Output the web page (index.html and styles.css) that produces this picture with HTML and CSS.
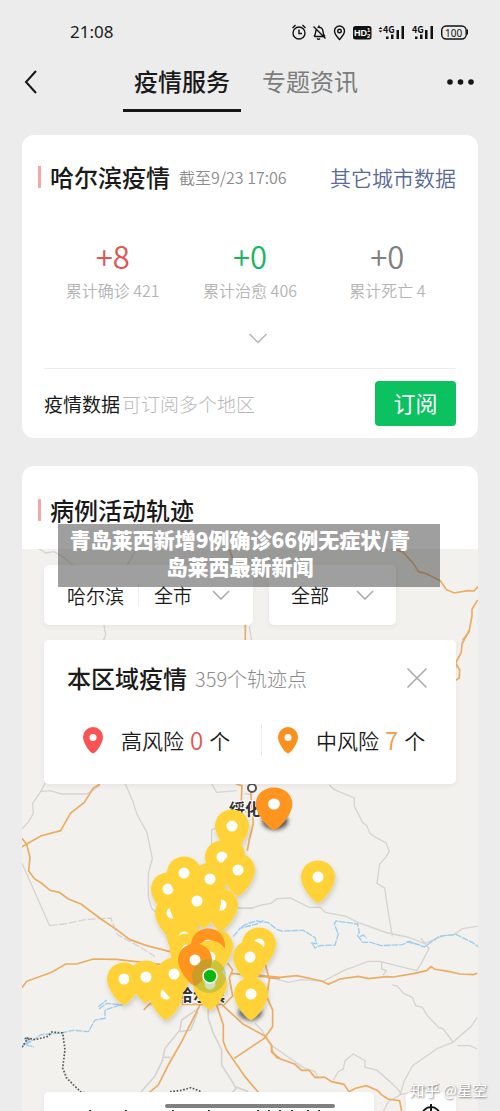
FILE: index.html
```html
<!DOCTYPE html>
<html lang="zh-CN">
<head>
<meta charset="utf-8">
<meta name="viewport" content="width=device-width, initial-scale=1">
<title>疫情服务</title>
<link rel="stylesheet" href="styles.css">
</head>
<body>
<div class="app">
  <div class="status">
    <time class="clock">21:08</time>
    <svg class="status-icons" width="180" height="18" viewBox="0 0 180 18" fill="none" stroke="#111" stroke-width="1.4" aria-hidden="true">
      <circle cx="9" cy="10" r="6"/><path d="M9 6.500V10.500h3M2.500 5l3-3M15.500 5l-3-3"/>
      <path d="M24.500 13.500h9.500M24 13.500c2-2 1.500-5 2-6.500M27.500 4.500c3-1 5.500 1 5.500 4 0 2 .5 3.500 2 5M27 15.500q1.500 1.500 3 0M23.500 3.500l12 12M29 4V2.500"/>
      <path d="M49.500 16.500c-2-2.500-5-5-5-8.500a5 5 0 0 1 10 0c0 3.500-3 6-5 8.500z"/><circle cx="49.500" cy="8" r="1.800"/>
      <rect x="63" y="3" width="18.500" height="13.500" rx="2.500" fill="#111" stroke="none"/>
      <g fill="#111" stroke="none">
        <text class="hd" x="64" y="13">HD</text>
        <text class="hd-num" x="77" y="9">1</text><text class="hd-num" x="77" y="15">2</text>
        <path d="M88.500 6l2-2 2 2zM88.500 7.500l2 2 2-2z"/>
        <text class="net" x="93" y="10">4G</text>
        <path d="M96 13.500h2.500V16H96zM101 11.500h2.500V16H101zM106.500 7h2.500v9h-2.500zM111.500 3h2.500v13h-2.500z"/>
        <text class="net" x="122" y="10">4G</text>
        <path d="M125 13.500h2.500V16H125zM130 11.500h2.500V16H130zM135 7h2.500v9H135zM140.500 3h2.500v13h-2.500z"/>
        <path d="M176.500 6.500h1.500v5h-1.500z"/>
        <text class="battery" x="155" y="13.500">100</text>
      </g>
      <rect x="151.700" y="3" width="24.500" height="13" rx="4.500"/>
    </svg>
  </div>

  <header class="nav">
    <button class="icon-button" type="button" aria-label="返回">
      <svg width="14" height="24" viewBox="0 0 14 24" fill="none" stroke="#161616" stroke-width="2"><path d="M12 1L2 12l10 11"/></svg>
    </button>
    <nav class="tabs">
      <a class="tab tab-active" href="#service" aria-current="page">疫情服务</a>
      <a class="tab" href="#news">专题资讯</a>
    </nav>
    <button class="icon-button" type="button" aria-label="更多">
      <svg width="28" height="8" viewBox="0 0 28 8" fill="#161616"><circle cx="4" cy="4" r="2.800"/><circle cx="14.500" cy="4" r="2.800"/><circle cx="25" cy="4" r="2.800"/></svg>
    </button>
  </header>

  <main class="content" id="service">
    <section class="card summary">
      <div class="card-head">
        <h2 class="title bar">哈尔滨疫情</h2>
        <span class="updated">截至9/23 17:06</span>
        <a class="other" href="#cities">其它城市数据</a>
      </div>
      <div class="stats">
        <div class="stat"><strong class="delta red">+8</strong><span class="total">累计确诊 421</span></div>
        <div class="stat"><strong class="delta green">+0</strong><span class="total">累计治愈 406</span></div>
        <div class="stat"><strong class="delta grey">+0</strong><span class="total">累计死亡 4</span></div>
      </div>
      <button class="expand" type="button" aria-label="展开">
        <svg width="18" height="11" viewBox="0 0 18 11" fill="none" stroke="#b5b5b5" stroke-width="1.500"><path d="M.5 1L9 9.500 17.500 1"/></svg>
      </button>
      <div class="subscribe">
        <p class="subscribe-text"><span>疫情数据</span><span class="hint">可订阅多个地区</span></p>
        <button class="subscribe-button" type="button">订阅</button>
      </div>
    </section>

    <section class="card track">
      <div class="track-head"><h2 class="title bar">病例活动轨迹</h2></div>
      <div class="map">
        <svg class="map-canvas" viewBox="22 549 456 562" preserveAspectRatio="xMidYMin slice" fill="none" role="img" aria-label="病例轨迹地图">
          <defs>
            <filter id="shade" x="-40%" y="-30%" width="180%" height="170%"><feDropShadow dx="1" dy="3" stdDeviation="2.500" flood-color="#000" flood-opacity=".16"/></filter>
            <filter id="soft" x="-50%" y="-50%" width="200%" height="200%"><feGaussianBlur stdDeviation="2"/></filter>
            <g id="pin"><path d="M0 26C-3.500 26-17 11-17 0A17 16.500 0 0 1 17 0C17 11 3.500 26 0 26Z"/><circle r="5.500" fill="#fff"/></g>
          </defs>
          <!-- district borders and minor roads -->
          <g stroke="#d5d4d1" stroke-width="4">
            <g transform="translate(20 480) scale(.3333)"><path d="M55 205l22 14 25-4 30 18 28 24M348 208l-26 47M252 435l5 30-12 30 10 45M688 440l10 60"/></g>
            <g transform="translate(20 780) scale(.3333)">
              <path d="M75 10L62 35 38 70l2 30-14 25-20 22M60 35l30-3 35 10h75l40-25M315 10l24 55 12 38 30 55 16 78-12 45v70l10 34 15 15M6 250l83 187" />
              <path d="M89 437l50-6 55-12 78-5 20 50 70 38 43 28" stroke-dasharray="24 5"/>
              <path d="M575 12l15 25 60-5M674 40l24 5M575 220v-70l35-15M640 385l60-2"/>
            </g>
            <g transform="translate(240 780) scale(.3333)">
              <path d="M0 385h35l30-10 28-5 18-14 40-2 57 28h33l15 15 62 12 35 18 90 32 60 12 50 20 60-25h25l30-20 85-14M268 15l15 14 60 25v24l25 50 12 8 10 25 12 8 36 20 10 25-11 18-18 20-8 58 23 14 8 55 15 90"/>
            </g>
            <g transform="translate(240 920) scale(.3333)">
              <path d="M100 175l45 12 40-8 65 5 60-32 75-28h35l50 13 60 15 12-18 25-48-25-32M425 125v22l14 5-10 14M457 195l15 3 20 23 25 11 10 25 20 5 15 25 35 36 12 3 30 40 55-47 18-28M638 367l-45 18-75 52-25 45-12 40M652 377h38l22 10M45 310l20 20 25 43 50 35 50 35 35 12 10 22M280 480l15-25 15-8 5-25 25-20 35 20v20l35 8 45 40 25 25v10l120-32M480 525l-35 20-15 28"/>
            </g>
            <g transform="translate(20 920) scale(.3333)"><path d="M565 260v35l15 45 25 50v45l35 55 8 15-20 22M645 500l40 15M535 265l-50 35-5 30-45 55-8 38-22 45-45 52M480 335l32-5 22-55M430 412h22" stroke-width="5"/></g>
          </g>
          <!-- rivers -->
          <g stroke="#9bcdef" stroke-width="4" stroke-dasharray="20 3">
            <g transform="translate(240 780) scale(.3333)"><path d="M5 440l20-10 25-7 35 5 25 20 15 5 65-2 35 22 5 18-15-2 10 15 15-7 45-2 10-32-12-32 5-8 65 9 5 25-5 10 15 20h25l30 10 65-3 20-10 45 17 45-32 50-6 50 25 20 15M360 470l10-5 10 10M500 485l40 10"/></g>
            <g transform="translate(20 920) scale(.3333)"><path d="M350 215l-30 20-15 20-45-5-24 18M300 255l-45 15v25l-30 5-20 35-45-4-37 8-60 5-30 20-25 15M640 50l20-25 50-13 20-10M12 355l18 10-18 8 30 8M235 260l25-20"/></g>
          </g>
          <!-- province boundary -->
          <g stroke="#555" stroke-width="5" stroke-dasharray="5 5" transform="translate(20 920) scale(.3333)"><path d="M6 382l18-28 22 5 38-10 12-13 32 3 7 50-7 55 12 30 25 25 18 17 25 5M450 515l35-4 28-8 30 12M15 354l20 6"/></g>
          <!-- highways -->
          <g stroke="#ecac62" stroke-width="5">
            <g transform="translate(20 480) scale(.3333)"><path d="M627 205l40 110 9 125v100"/></g>
            <g transform="translate(250 480) scale(.3333)"><path d="M423 207l35 8 30 33 18 27 20 5 45 22 18 27 24 10 40-7 19 1 15-16M683 360l-17 28v20l-9 48-19 24"/></g>
            <g transform="translate(20 630) scale(.3333)"><path d="M1348 0l-22 42-2 25-17 32 12 20-1 25-12 8M1307 99v16"/></g>
            <g transform="translate(20 780) scale(.3333)">
              <path d="M240 12l-20 12-27 43-41 32-16 28-14 25-60 16-62 36M6 175l14 18 10 40-4 40 18 24 20 12 26 22 28 6 27 20 38 15 60 45 47 32 40 30 50 18 70 18M648 12l18 5-2 50 15 30M690 10l10 120-12 50-6 32"/>
            </g>
            <g transform="translate(20 920) scale(.3333)">
              <path d="M6 203l14-19 75-27 42-25h33l50-15 70 1 130 15 45 3M371 270l15-15 40-20M488 215v38h125l25-25-10-55 10-23-15-20M635 160l145 15M728 100l20 80-8 50 18 40v50l-25 35-90 60M540 255l-25 50-30 60-40 70-30 60-30 25M590 255l20 60v50l10 25 55 80 40 47M605 253l65 60 65 35 20 28v20l25 20"/>
            </g>
            <g transform="translate(240 920) scale(.3333)"><path d="M0 160l120 12 50-5 48 10 27 6 20 10 35-16 55-8 30 7 55-6 20 1 60-10 40-9 13-12 12 8 40 6 35 8 40 2 12-4M95 375v15l15 23 55 20 20 18h22l18 21h30l20 13 37 8 15 22 20-10 32-8 35 15 10 12 20 13 35 5 7 37"/></g>
          </g>
          <circle cx="252" cy="788" r="4" fill="#fff" stroke="#555" stroke-width="2"/>
          <text class="place" x="229" y="815">绥化</text>
          <text class="place" x="177" y="1001">哈尔滨</text>
          <g fill="#ffd338" filter="url(#shade)">
            <use href="#pin" x="228" y="855"/><use href="#pin" x="222" y="857"/>
            <use href="#pin" x="232" y="826"/><use href="#pin" x="238" y="870"/>
            <use href="#pin" x="168" y="889"/><use href="#pin" x="210" y="879"/>
            <use href="#pin" x="184" y="873"/><use href="#pin" x="172" y="913"/>
            <use href="#pin" x="221" y="905"/><use href="#pin" x="187" y="907"/>
            <use href="#pin" x="204" y="902"/><use href="#pin" x="197" y="901"/>
            <use href="#pin" x="318" y="877"/>
          </g>
          <ellipse cx="250" cy="1013" rx="12" ry="7" fill="#777" filter="url(#soft)"/>
          <g fill="#ffd338" filter="url(#shade)">
            <use href="#pin" x="166" y="994"/><use href="#pin" x="124" y="979"/>
            <use href="#pin" x="146" y="977"/><use href="#pin" x="174" y="974"/>
            <use href="#pin" x="184" y="937"/><use href="#pin" x="187" y="950"/>
            <use href="#pin" x="216" y="946"/><use href="#pin" x="259" y="944"/>
            <use href="#pin" x="250" y="957"/><use href="#pin" x="251" y="994"/>
            <use href="#pin" x="210" y="984"/>
          </g>
          <use href="#pin" x="208" y="945" fill="#ff951f"/>
          <use href="#pin" x="210" y="957" fill="#ffd338"/>
          <ellipse cx="275" cy="821" rx="13" ry="9" fill="#555" filter="url(#soft)"/>
          <g fill="#ff951f">
            <use href="#pin" x="195" y="960"/>
            <g transform="translate(274 804) scale(1.080 1)"><use href="#pin"/></g>
          </g>
          <circle cx="209" cy="976" r="17" fill="#6ca834" fill-opacity=".35"/>
          <circle cx="210" cy="976" r="7" fill="#0bb80f" stroke="#fff" stroke-width="1.500"/>
        </svg>

        <div class="map-ui">
          <div class="filters">
            <div class="filter filter-city">
              <span class="city">哈尔滨</span>
              <label class="pick">
                <select class="select" aria-label="区域"><option>全市</option></select>
                <svg class="chevron" width="18" height="10" viewBox="0 0 18 10" fill="none" stroke="#aaa" stroke-width="1.600"><path d="M1 1l8 8 8-8"/></svg>
              </label>
            </div>
            <div class="filter filter-type">
              <label class="pick">
                <select class="select" aria-label="类型"><option>全部</option></select>
                <svg class="chevron" width="18" height="10" viewBox="0 0 18 10" fill="none" stroke="#aaa" stroke-width="1.600"><path d="M1 1l8 8 8-8"/></svg>
              </label>
            </div>
          </div>
          <section class="region">
            <div class="region-head">
              <h3 class="title">本区域疫情</h3>
              <span class="points">359个轨迹点</span>
              <button class="icon-button close" type="button" aria-label="关闭">
                <svg width="22" height="22" viewBox="0 0 22 22" fill="none" stroke="#aaa" stroke-width="1.600"><path d="M1.500 1.500l19 19M20.500 1.500l-19 19"/></svg>
              </button>
            </div>
            <div class="risks">
              <div class="risk">
                <svg class="risk-pin" width="20" height="27" viewBox="0 0 20 27"><path d="M10 26.500C8 26.500 0 17 0 10a10 10 0 0 1 20 0c0 7-8 16.500-10 16.500z" fill="#f95354"/><circle cx="10" cy="10.500" r="3.500" fill="#fff"/></svg>
                <span>高风险</span><b class="count red">0</b><span>个</span>
              </div>
              <div class="risk">
                <svg class="risk-pin" width="20" height="27" viewBox="0 0 20 27"><path d="M10 26.500C8 26.500 0 17 0 10a10 10 0 0 1 20 0c0 7-8 16.500-10 16.500z" fill="#fb901e"/><circle cx="10" cy="10.500" r="3.500" fill="#fff"/></svg>
                <span>中风险</span><b class="count orange">7</b><span>个</span>
              </div>
            </div>
          </section>
          <div class="dock">
            <div class="sheet">
              <svg width="280" height="19" viewBox="0 0 280 19" stroke="#333" stroke-width="2" aria-hidden="true"><path d="M46 18v1M82 18v1M129 18v1M165 18v1M214 18v1M225 18v1M236 18v1M248 18v1M264 18v1M275 18v1"/></svg>
            </div>
            <button class="locate" type="button" aria-label="定位">
              <svg width="24" height="24" viewBox="0 0 24 24" fill="none" stroke="#161616" stroke-width="2"><circle cx="12" cy="12" r="9"/><path d="M12 0v7M12 17v7M0 12h7M17 12h7"/></svg>
            </button>
          </div>
        </div>
      </div>
    </section>
  </main>

  <p class="headline">青岛莱西新增9例确诊66例无症状/青岛莱西最新新闻</p>
  <p class="watermark">知乎 @星空</p>
  <div class="home"></div>
</div>
</body>
</html>
```
FILE: styles.css
```css
* {
  box-sizing: border-box;
}

body {
  margin: 0;
  background: #ececec;
  color: #1a1a1a;
  font-family: "Noto Sans CJK SC", "Noto Sans", sans-serif;
  font-size: 19px;
}

h2, h3, p {
  margin: 0;
}

button {
  border: 0;
  padding: 0;
  background: none;
  font: inherit;
  color: inherit;
}

svg {
  display: block;
}

.app {
  position: relative;
  display: flex;
  flex-direction: column;
  height: 100vh;
  overflow: hidden;
}

.status {
  display: flex;
  justify-content: space-between;
  align-items: flex-end;
  height: 44px;
  padding: 0 30px 3px 70px;
}

.clock {
  font: 17px/18px "Noto Sans", sans-serif;
}

.hd {
  font: bold 9px "Liberation Sans", sans-serif;
  fill: #fff;
}

.hd-num {
  font: bold 6px "Liberation Sans", sans-serif;
  fill: #fff;
}

.net {
  font: bold 9px "Noto Sans CJK SC", sans-serif;
}

.battery {
  font: 10px "Noto Sans", sans-serif;
}

.nav {
  display: flex;
  align-items: center;
  height: 68px;
  padding: 0 26px 0 24px;
}

.icon-button {
  display: grid;
  place-items: center;
}

.nav .icon-button {
  height: 60px;
  padding-top: 7px;
}

.tabs {
  display: flex;
  flex: 1;
  align-self: stretch;
  padding-left: 85px;
}

.tab {
  padding: 0 11px;
  color: #7c7c7c;
  font-size: 24px;
  line-height: 73px;
  font-weight: 400;
  text-decoration: none;
  height: 68px;
}

.tab-active {
  border-bottom: 3px solid #161616;
  color: #1a1a1a;
  font-weight: 500;
  margin-right: 10px;
}

.content {
  display: flex;
  flex: 1;
  flex-direction: column;
  gap: 28px;
  min-height: 0;
  padding: 23px 22px 0;
}

.card {
  border-radius: 12px;
  background: #fff;
}

.summary {
  padding: 22px 22px 12px;
}

.card-head {
  display: flex;
  align-items: center;
  height: 40px;
}

.title {
  font-size: 24px;
  line-height: 36px;
  font-weight: 500;
  white-space: nowrap;
}

.bar {
  display: flex;
  align-items: center;
  gap: 9px;
  margin-left: -6px;
}

.bar::before {
  content: "";
  width: 3px;
  height: 22px;
  background: #f4a7a7;
}

.updated {
  margin-left: 9px;
  color: #8c8c8c;
  font-size: 16px;
  font-weight: 350;
  white-space: nowrap;
}

.other {
  margin-left: auto;
  color: #576b95;
  font-size: 21px;
  font-weight: 350;
  text-decoration: none;
  white-space: nowrap;
}

.stats {
  display: grid;
  grid-template-columns: repeat(3, 1fr);
  padding-top: 36px;
}

.stat {
  display: flex;
  flex-direction: column;
  align-items: center;
}

.delta {
  font-size: 31px;
  line-height: 45px;
  font-weight: 350;
}

.total {
  color: #b4b4b4;
  font-size: 16px;
  line-height: 24px;
  font-weight: 350;
}

.red {
  color: #e05655;
}

.green {
  color: #1bb562;
}

.grey {
  color: #808080;
}

.orange {
  color: #f0a04a;
}

.expand {
  display: grid;
  place-items: center;
  width: 100%;
  height: 66px;
  padding: 6px 0 0 16px;
}

.subscribe {
  display: flex;
  align-items: center;
  justify-content: space-between;
  border-top: 1px solid #ededed;
  padding-top: 12px;
}

.subscribe-text {
  display: flex;
  gap: 2px;
}

.hint {
  color: #b8b8b8;
  font-weight: 300;
}

.subscribe-button {
  width: 81px;
  height: 45px;
  border-radius: 4px;
  background: #0bc160;
  color: #fff;
  font-size: 22px;
  line-height: 42px;
  padding-bottom: 3px;
}

.track {
  display: flex;
  flex: 1;
  flex-direction: column;
  min-height: 0;
}

.track-head {
  padding: 26px 22px 21px;
}

.map {
  position: relative;
  flex: 1;
  min-height: 0;
  overflow: hidden;
  background: #f2f1ed;
}

.map-canvas {
  position: absolute;
  inset: 0;
  width: 100%;
  height: 100%;
}

.place {
  fill: #333;
  font-size: 16px;
  font-weight: 700;
  stroke: #fff;
  stroke-width: 2px;
  paint-order: stroke;
}

.map-ui {
  position: relative;
  display: flex;
  flex-direction: column;
  height: 100%;
  padding: 16px 22px 0;
}

.filters {
  display: flex;
  gap: 16px;
}

.filter,
.region,
.sheet,
.locate {
  border-radius: 5px;
  background: #fff;
  box-shadow: 0 2px 5px rgba(0, 0, 0, 0.05);
}

.filter {
  display: flex;
  align-items: center;
  height: 60px;
  padding: 0 23px;
  font-weight: 350;
}

.city {
  margin-right: 14px;
}

.filter-city .pick {
  border-left: 1px solid #ececec;
  padding-left: 15px;
}

.pick {
  display: flex;
  align-items: center;
  line-height: 24px;
}

.select {
  appearance: none;
  border: 0;
  padding: 0;
  background: none;
  color: inherit;
  font: inherit;
}

.chevron {
  margin-left: 19px;
}

.filter-type {
  padding: 0 22px;
}

.filter-type .chevron {
  margin-left: 26px;
}

.region {
  margin-top: 15px;
  padding: 19px 23px 28px;
}

.region-head {
  display: flex;
  align-items: center;
  height: 38px;
}

.points {
  margin-left: 8px;
  color: #8c8c8c;
  font-size: 20px;
  font-weight: 300;
}

.close {
  width: 32px;
  height: 32px;
  margin-left: auto;
}

.risks {
  display: grid;
  grid-template-columns: 193fr 171fr;
  padding-top: 27px;
  font-size: 21px;
  line-height: 32px;
  font-weight: 350;
}

.risk {
  display: flex;
  align-items: center;
  height: 32px;
  padding-left: 16px;
}

.risk + .risk {
  border-left: 1px solid #ececec;
}

.risk-pin {
  margin-right: 18px;
}

.count {
  margin: 0 6px;
  font-size: 24px;
  font-weight: 350;
}

.dock {
  display: flex;
  flex: none;
  justify-content: space-between;
  margin-top: auto;
  height: 19px;
}

.sheet {
  width: 80%;
  height: 60px;
}

.locate {
  display: grid;
  justify-items: center;
  align-items: start;
  width: 50px;
  height: 60px;
  padding-top: 12px;
}

.headline {
  position: absolute;
  top: 524px;
  left: 58px;
  right: 60px;
  padding: 2px 24px 7px 6px;
  background: rgba(80, 80, 80, 0.55);
  color: #fff;
  font-size: 21px;
  line-height: 27px;
  font-weight: 900;
  text-align: center;
}

.watermark {
  position: absolute;
  right: 13px;
  bottom: 9px;
  color: #fff;
  font-size: 15px;
  line-height: 24px;
  text-shadow: 1px 1px 2px rgba(0, 0, 0, 0.5);
}

.home {
  position: absolute;
  left: 33%;
  right: 33%;
  bottom: 3px;
  height: 4px;
  border-radius: 2px;
  background: #808080;
}
```
